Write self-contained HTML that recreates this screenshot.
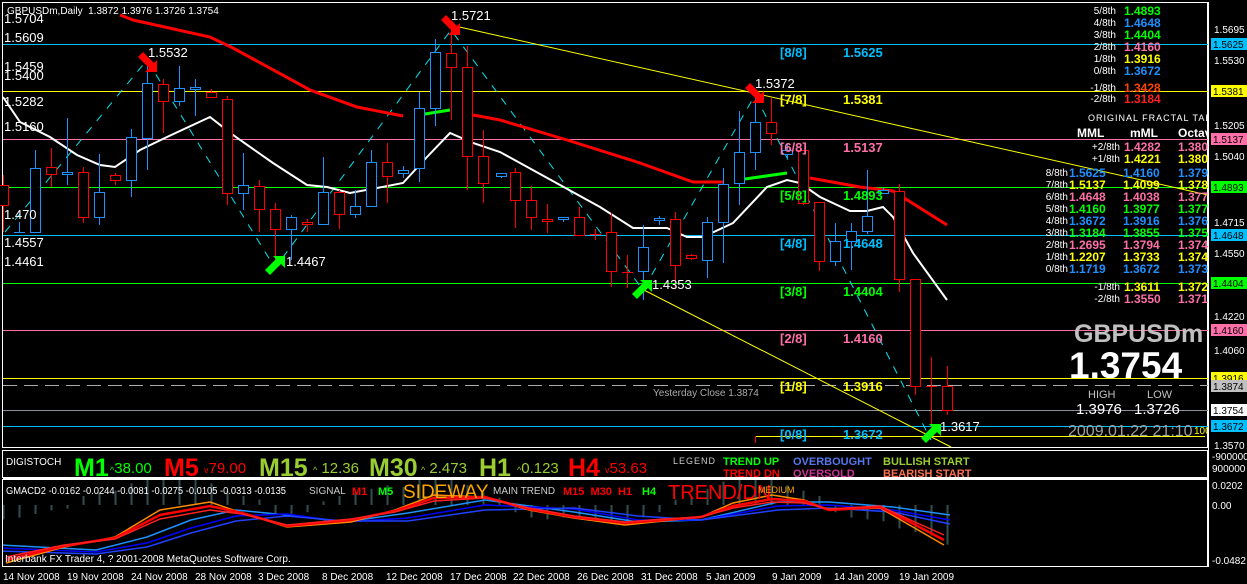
<!DOCTYPE html>
<html><head><meta charset="utf-8"><style>
html,body{margin:0;padding:0;background:#000;}
svg{display:block;}
text{font-family:"Liberation Sans",sans-serif;}
.n{font-family:"Liberation Sans Narrow","Liberation Sans",sans-serif;}
</style></head><body>
<svg width="1247" height="584" viewBox="0 0 1247 584" xmlns="http://www.w3.org/2000/svg">
<rect width="1247" height="584" fill="#000"/>
<g fill="none" stroke="#fff" stroke-width="1">
<rect x="2.5" y="2.5" width="1205" height="445"/>
<rect x="2.5" y="450.5" width="1205" height="27"/>
<rect x="2.5" y="479.5" width="1205" height="87"/>
</g>
<g stroke-width="1">
<line x1="3" x2="1208" y1="44.5" y2="44.5" stroke="#00bfff"/>
<line x1="3" x2="1208" y1="91.5" y2="91.5" stroke="#ffff00"/>
<line x1="3" x2="1208" y1="139.5" y2="139.5" stroke="#ff6fa8"/>
<line x1="3" x2="1208" y1="187.5" y2="187.5" stroke="#00ff00"/>
<line x1="3" x2="1208" y1="235.5" y2="235.5" stroke="#00bfff"/>
<line x1="3" x2="1208" y1="283.5" y2="283.5" stroke="#00ff00"/>
<line x1="3" x2="1208" y1="330.5" y2="330.5" stroke="#ff6fa8"/>
<line x1="3" x2="1208" y1="378.5" y2="378.5" stroke="#ffff00"/>
<line x1="3" x2="1208" y1="385.5" y2="385.5" stroke="#aaa" stroke-dasharray="14,7"/>
<line x1="3" x2="1208" y1="410.5" y2="410.5" stroke="#8a8f98"/>
<line x1="3" x2="1208" y1="426.5" y2="426.5" stroke="#00bfff"/>
<line x1="755" x2="1205" y1="436.5" y2="436.5" stroke="#ffff00"/>
<line x1="755.5" x2="755.5" y1="436" y2="443" stroke="#f00"/>
</g>
<line x1="455" y1="26" x2="1208" y2="195" stroke="#ffff00" stroke-width="1"/>
<line x1="640" y1="288" x2="951" y2="447" stroke="#ffff00" stroke-width="1"/>
<polyline points="5,232 147,60 275,268 451,30 643,290 755,95 931,440" fill="none" stroke="#00e5ee" stroke-width="1" stroke-dasharray="8,8"/>
<polyline fill="none" stroke="#f00" stroke-width="3" points="120,15 133,20 210,37 233,48 310,90 357,107 403,116"/>
<polyline fill="none" stroke="#0f0" stroke-width="3" points="425,114 450,110"/>
<polyline fill="none" stroke="#f00" stroke-width="3" points="473,115 500,120 567,140 640,163 693,182 723,182"/>
<polyline fill="none" stroke="#0f0" stroke-width="3" points="745,179 787,173"/>
<polyline fill="none" stroke="#f00" stroke-width="3" points="810,178 860,187 893,191 947,225"/>
<polyline fill="none" stroke="#fff" stroke-width="2" points="3,97 20,122 50,137 77,155 100,165 115,167 140,150 167,137 210,117 233,135 273,163 307,185 327,187 350,193 377,188 403,183 427,157 450,133 473,143 500,152 600,207 633,228 667,228 687,237 703,237 733,223 767,187 787,180 800,183 820,197 850,211 867,211 883,207 893,217 913,253 947,300"/>
<g stroke="#f00" stroke-width="1" fill="#000">
<line x1="3.5" x2="3.5" y1="175" y2="232"/><rect x="-1.5" y="185.5" width="10" height="20"/>
<line x1="51.5" x2="51.5" y1="148" y2="187"/><rect x="46.5" y="167.5" width="10" height="7"/>
<line x1="83.5" x2="83.5" y1="167" y2="223"/><rect x="78.5" y="172.5" width="10" height="45"/>
<line x1="115.5" x2="115.5" y1="173" y2="185"/><rect x="110.5" y="175.5" width="10" height="5"/>
<line x1="163.5" x2="163.5" y1="79" y2="133"/><rect x="158.5" y="84.5" width="10" height="17"/>
<line x1="211.5" x2="211.5" y1="89" y2="97"/><rect x="206.5" y="92.5" width="10" height="5"/>
<line x1="227.5" x2="227.5" y1="96" y2="205"/><rect x="222.5" y="99.5" width="10" height="94"/>
<line x1="259.5" x2="259.5" y1="180" y2="232"/><rect x="254.5" y="186.5" width="10" height="23"/>
<line x1="275.5" x2="275.5" y1="203" y2="268"/><rect x="270.5" y="209.5" width="10" height="20"/>
<line x1="307.5" x2="307.5" y1="219" y2="232"/><rect x="302.5" y="222.5" width="10" height="2"/>
<line x1="339.5" x2="339.5" y1="190" y2="229"/><rect x="334.5" y="192.5" width="10" height="22"/>
<line x1="387.5" x2="387.5" y1="143" y2="203"/><rect x="382.5" y="162.5" width="10" height="14"/>
<line x1="451.5" x2="451.5" y1="30" y2="120"/><rect x="446.5" y="53.5" width="10" height="14"/>
<line x1="467.5" x2="467.5" y1="46" y2="190"/><rect x="462.5" y="67.5" width="10" height="89"/>
<line x1="483.5" x2="483.5" y1="130" y2="203"/><rect x="478.5" y="156.5" width="10" height="27"/>
<line x1="515.5" x2="515.5" y1="168" y2="228"/><rect x="510.5" y="172.5" width="10" height="28"/>
<line x1="531.5" x2="531.5" y1="186" y2="230"/><rect x="526.5" y="200.5" width="10" height="17"/>
<line x1="547.5" x2="547.5" y1="204" y2="233"/><rect x="542.5" y="219.5" width="10" height="2"/>
<line x1="579.5" x2="579.5" y1="207" y2="235"/><rect x="574.5" y="217.5" width="10" height="18"/>
<line x1="595.5" x2="595.5" y1="229" y2="240"/><line x1="590" x2="601" y1="234.5" y2="234.5"/>
<line x1="611.5" x2="611.5" y1="213" y2="287"/><rect x="606.5" y="232.5" width="10" height="39"/>
<line x1="627.5" x2="627.5" y1="255" y2="288"/><line x1="622" x2="633" y1="272.5" y2="272.5"/>
<line x1="675.5" x2="675.5" y1="212" y2="289"/><rect x="670.5" y="219.5" width="10" height="46"/>
<line x1="691.5" x2="691.5" y1="254" y2="260"/><rect x="686.5" y="255.5" width="10" height="3"/>
<line x1="771.5" x2="771.5" y1="98" y2="145"/><rect x="766.5" y="122.5" width="10" height="11"/>
<line x1="803.5" x2="803.5" y1="150" y2="205"/><rect x="798.5" y="150.5" width="10" height="53"/>
<line x1="819.5" x2="819.5" y1="202" y2="271"/><rect x="814.5" y="202.5" width="10" height="59"/>
<line x1="899.5" x2="899.5" y1="184" y2="292"/><rect x="894.5" y="191.5" width="10" height="88"/>
<line x1="915.5" x2="915.5" y1="279" y2="395"/><rect x="910.5" y="279.5" width="10" height="107"/>
<line x1="931.5" x2="931.5" y1="357" y2="437"/><line x1="926" x2="937" y1="386.5" y2="386.5"/>
<line x1="947.5" x2="947.5" y1="366" y2="415"/><rect x="942.5" y="386.5" width="10" height="24"/>
</g>
<g stroke="#1e90ff" stroke-width="1" fill="#000">
<line x1="19.5" x2="19.5" y1="222" y2="232"/><line x1="14" x2="25" y1="232.5" y2="232.5"/>
<line x1="35.5" x2="35.5" y1="150" y2="232"/><rect x="30.5" y="168.5" width="10" height="64"/>
<line x1="67.5" x2="67.5" y1="118" y2="185"/><rect x="62.5" y="172.5" width="10" height="2"/>
<line x1="99.5" x2="99.5" y1="154" y2="225"/><rect x="94.5" y="192.5" width="10" height="25"/>
<line x1="131.5" x2="131.5" y1="129" y2="197"/><rect x="126.5" y="137.5" width="10" height="43"/>
<line x1="147.5" x2="147.5" y1="60" y2="170"/><rect x="142.5" y="83.5" width="10" height="55"/>
<line x1="179.5" x2="179.5" y1="66" y2="106"/><rect x="174.5" y="88.5" width="10" height="13"/>
<line x1="195.5" x2="195.5" y1="79" y2="116"/><rect x="190.5" y="87.5" width="10" height="2"/>
<line x1="243.5" x2="243.5" y1="153" y2="210"/><rect x="238.5" y="185.5" width="10" height="8"/>
<line x1="291.5" x2="291.5" y1="215" y2="260"/><rect x="286.5" y="217.5" width="10" height="12"/>
<line x1="323.5" x2="323.5" y1="157" y2="225"/><rect x="318.5" y="192.5" width="10" height="32"/>
<line x1="355.5" x2="355.5" y1="190" y2="218"/><rect x="350.5" y="206.5" width="10" height="8"/>
<line x1="371.5" x2="371.5" y1="150" y2="206"/><rect x="366.5" y="162.5" width="10" height="44"/>
<line x1="403.5" x2="403.5" y1="166" y2="178"/><rect x="398.5" y="170.5" width="10" height="3"/>
<line x1="419.5" x2="419.5" y1="92" y2="182"/><rect x="414.5" y="108.5" width="10" height="60"/>
<line x1="435.5" x2="435.5" y1="39" y2="126"/><rect x="430.5" y="52.5" width="10" height="56"/>
<line x1="501.5" x2="501.5" y1="173" y2="178"/><rect x="496.5" y="173.5" width="10" height="3"/>
<line x1="563.5" x2="563.5" y1="217" y2="222"/><rect x="558.5" y="217.5" width="10" height="2"/>
<line x1="643.5" x2="643.5" y1="225" y2="300"/><rect x="638.5" y="247.5" width="10" height="24"/>
<line x1="659.5" x2="659.5" y1="216" y2="225"/><rect x="654.5" y="218.5" width="10" height="2"/>
<line x1="707.5" x2="707.5" y1="217" y2="278"/><rect x="702.5" y="222.5" width="10" height="38"/>
<line x1="723.5" x2="723.5" y1="168" y2="263"/><rect x="718.5" y="184.5" width="10" height="38"/>
<line x1="739.5" x2="739.5" y1="111" y2="205"/><rect x="734.5" y="152.5" width="10" height="31"/>
<line x1="755.5" x2="755.5" y1="93" y2="170"/><rect x="750.5" y="122.5" width="10" height="30"/>
<line x1="787.5" x2="787.5" y1="143" y2="158"/><rect x="782.5" y="150.5" width="10" height="4"/>
<line x1="835.5" x2="835.5" y1="223" y2="266"/><rect x="830.5" y="241.5" width="10" height="20"/>
<line x1="851.5" x2="851.5" y1="223" y2="270"/><rect x="846.5" y="231.5" width="10" height="10"/>
<line x1="867.5" x2="867.5" y1="170" y2="234"/><rect x="862.5" y="216.5" width="10" height="15"/>
<line x1="883.5" x2="883.5" y1="188" y2="193"/><rect x="878.5" y="190.5" width="10" height="3"/>
</g>
<g fill="#f00">
<polygon points="157,72 145,72 149,68 138,57 143,52 154,63 157,60"/>
<polygon points="460,35 448,35 452,31 441,20 446,15 457,26 460,23"/>
<polygon points="764,103 752,103 756,99 745,88 750,83 761,94 764,91"/>
</g>
<g fill="#0f0">
<polygon points="285,256 285,268 281,264 270,275 265,270 276,259 273,256"/>
<polygon points="652,280 652,292 648,288 637,299 632,294 643,283 640,280"/>
<polygon points="941,424 941,436 937,432 926,443 921,438 932,427 929,424"/>
</g>
<g fill="#fff" font-size="13">
<text x="148" y="57">1.5532</text>
<text x="451" y="20">1.5721</text>
<text x="755" y="88">1.5372</text>
<text x="286" y="266">1.4467</text>
<text x="652" y="289">1.4353</text>
<text x="940" y="431">1.3617</text>
</g>
<g fill="#fff" font-size="13">
<text x="4" y="23">1.5704</text>
<text x="4" y="42">1.5609</text>
<text x="4" y="71">1.5459</text>
<text x="4" y="80">1.5400</text>
<text x="4" y="106">1.5282</text>
<text x="4" y="131">1.5160</text>
<text x="4" y="219">1.470</text>
<text x="4" y="247">1.4557</text>
<text x="4" y="266">1.4461</text>
</g>
<text x="7" y="14" fill="#fff" font-size="10">GBPUSDm,Daily&#160; 1.3872 1.3976 1.3726 1.3754</text>
<g font-size="13" font-weight="bold">
<text x="780" y="57" fill="#00bfff">[8/8]</text><text x="843" y="57" fill="#00bfff">1.5625</text>
<text x="780" y="104" fill="#ffff00">[7/8]</text><text x="843" y="104" fill="#ffff00">1.5381</text>
<text x="780" y="152" fill="#ff6fa8">[6/8]</text><text x="843" y="152" fill="#ff6fa8">1.5137</text>
<text x="780" y="200" fill="#00ff00">[5/8]</text><text x="843" y="200" fill="#00ff00">1.4893</text>
<text x="780" y="248" fill="#00bfff">[4/8]</text><text x="843" y="248" fill="#00bfff">1.4648</text>
<text x="780" y="296" fill="#00ff00">[3/8]</text><text x="843" y="296" fill="#00ff00">1.4404</text>
<text x="780" y="343" fill="#ff6fa8">[2/8]</text><text x="843" y="343" fill="#ff6fa8">1.4160</text>
<text x="780" y="391" fill="#ffff00">[1/8]</text><text x="843" y="391" fill="#ffff00">1.3916</text>
<text x="780" y="439" fill="#00bfff">[0/8]</text><text x="843" y="439" fill="#00bfff">1.3672</text>
</g>
<text x="653" y="396" fill="#aaa" font-size="10">Yesterday Close 1.3874</text>
<g font-size="10" fill="#fff" text-anchor="end">
<text x="1116" y="14">5/8th</text><text x="1116" y="26">4/8th</text><text x="1116" y="38">3/8th</text><text x="1116" y="50">2/8th</text><text x="1116" y="62">1/8th</text><text x="1116" y="74">0/8th</text><text x="1116" y="91">-1/8th</text><text x="1116" y="102">-2/8th</text>
</g>
<g font-size="12" font-weight="bold">
<text x="1124" y="15" fill="#00ff00">1.4893</text>
<text x="1124" y="27" fill="#1e90ff">1.4648</text>
<text x="1124" y="39" fill="#00ff00">1.4404</text>
<text x="1124" y="51" fill="#ff6fa8">1.4160</text>
<text x="1124" y="63" fill="#ffff00">1.3916</text>
<text x="1124" y="75" fill="#1e90ff">1.3672</text>
<text x="1124" y="92" fill="#ff4500">1.3428</text>
<text x="1124" y="103" fill="#ff2020">1.3184</text>
</g>
<text x="1088" y="121" fill="#fff" font-size="9" letter-spacing="1">ORIGINAL FRACTAL TABLE</text>
<g fill="#fff" font-size="12" font-weight="bold">
<text x="1077" y="137">MML</text><text x="1130" y="137">mML</text><text x="1178" y="137">Octav</text>
</g>
<svg x="1030" y="138" width="178" height="170" overflow="hidden">
<g font-size="10" fill="#fff" text-anchor="end" transform="translate(-1030,-138)">
<text x="1120" y="150">+2/8th</text><text x="1120" y="162">+1/8th</text>
<text x="1068" y="176">8/8th</text><text x="1068" y="188">7/8th</text><text x="1068" y="200">6/8th</text><text x="1068" y="212">5/8th</text><text x="1068" y="224">4/8th</text><text x="1068" y="236">3/8th</text><text x="1068" y="248">2/8th</text><text x="1068" y="260">1/8th</text><text x="1068" y="272">0/8th</text>
<text x="1120" y="290">-1/8th</text><text x="1120" y="302">-2/8th</text>
</g>
<g font-size="12" font-weight="bold" transform="translate(-1030,-138)">
<text x="1124" y="151" fill="#ff6fa8">1.4282</text><text x="1178" y="151" fill="#ff6fa8">1.380</text>
<text x="1124" y="163" fill="#ffff00">1.4221</text><text x="1178" y="163" fill="#ffff00">1.380</text>
<text x="1069" y="177" fill="#1e90ff">1.5625</text><text x="1123" y="177" fill="#1e90ff">1.4160</text><text x="1178" y="177" fill="#1e90ff">1.379</text>
<text x="1069" y="189" fill="#ffff00">1.5137</text><text x="1123" y="189" fill="#ffff00">1.4099</text><text x="1178" y="189" fill="#ffff00">1.378</text>
<text x="1069" y="201" fill="#ff6fa8">1.4648</text><text x="1123" y="201" fill="#ff6fa8">1.4038</text><text x="1178" y="201" fill="#ff6fa8">1.377</text>
<text x="1069" y="213" fill="#00ff00">1.4160</text><text x="1123" y="213" fill="#00ff00">1.3977</text><text x="1178" y="213" fill="#00ff00">1.377</text>
<text x="1069" y="225" fill="#1e90ff">1.3672</text><text x="1123" y="225" fill="#1e90ff">1.3916</text><text x="1178" y="225" fill="#1e90ff">1.376</text>
<text x="1069" y="237" fill="#00ff00">1.3184</text><text x="1123" y="237" fill="#00ff00">1.3855</text><text x="1178" y="237" fill="#00ff00">1.375</text>
<text x="1069" y="249" fill="#ff6fa8">1.2695</text><text x="1123" y="249" fill="#ff6fa8">1.3794</text><text x="1178" y="249" fill="#ff6fa8">1.374</text>
<text x="1069" y="261" fill="#ffff00">1.2207</text><text x="1123" y="261" fill="#ffff00">1.3733</text><text x="1178" y="261" fill="#ffff00">1.374</text>
<text x="1069" y="273" fill="#1e90ff">1.1719</text><text x="1123" y="273" fill="#1e90ff">1.3672</text><text x="1178" y="273" fill="#1e90ff">1.373</text>
<text x="1124" y="291" fill="#ffff00">1.3611</text><text x="1178" y="291" fill="#ffff00">1.372</text>
<text x="1124" y="303" fill="#ff6fa8">1.3550</text><text x="1178" y="303" fill="#ff6fa8">1.371</text>
</g>
</svg>
<text x="1074" y="342" fill="#c0c0c0" font-size="25" font-weight="bold">GBPUSDm</text>
<text x="1069" y="378" fill="#fff" font-size="37" font-weight="bold">1.3754</text>
<text x="1088" y="398" fill="#c0c0c0" font-size="11">HIGH</text><text x="1147" y="398" fill="#c0c0c0" font-size="11">LOW</text>
<text x="1076" y="414" fill="#fff" font-size="15">1.3976</text><text x="1134" y="414" fill="#fff" font-size="15">1.3726</text>
<text x="1068" y="436" fill="#a0a0a0" font-size="16">2009.01.22 21:10</text>
<text x="1194" y="434" fill="#ffff00" font-size="10">100.0</text>
<rect x="1209" y="0" width="38" height="584" fill="#000"/>
<line x1="1208.5" x2="1208.5" y1="2" y2="567" stroke="#fff"/>
<g font-size="10" fill="#fff">
<text x="1214" y="33">1.5695</text><text x="1214" y="64">1.5530</text><text x="1214" y="129">1.5205</text><text x="1214" y="160">1.5040</text><text x="1214" y="226">1.4715</text><text x="1214" y="257">1.4550</text><text x="1214" y="320">1.4220</text><text x="1214" y="354">1.4060</text><text x="1214" y="449">1.3570</text>
<text x="1212" y="460">-900000</text><text x="1212" y="472">900000</text>
<text x="1212" y="489">0.0202</text><text x="1212" y="509">0.00</text><text x="1212" y="564">-0.0482</text>
</g>
<g font-size="10">
<rect x="1211" y="38" width="36" height="12" fill="#00bfff"/><text x="1213" y="48" fill="#000">1.5625</text>
<rect x="1211" y="85" width="36" height="12" fill="#ffff00"/><text x="1213" y="95" fill="#000">1.5381</text>
<rect x="1211" y="133" width="36" height="12" fill="#ff6fa8"/><text x="1213" y="143" fill="#000">1.5137</text>
<rect x="1211" y="181" width="36" height="12" fill="#00ff00"/><text x="1213" y="191" fill="#000">1.4893</text>
<rect x="1211" y="229" width="36" height="12" fill="#00bfff"/><text x="1213" y="239" fill="#000">1.4648</text>
<rect x="1211" y="277" width="36" height="12" fill="#00ff00"/><text x="1213" y="287" fill="#000">1.4404</text>
<rect x="1211" y="324" width="36" height="12" fill="#ff6fa8"/><text x="1213" y="334" fill="#000">1.4160</text>
<rect x="1211" y="372" width="36" height="12" fill="#ffff00"/><text x="1213" y="382" fill="#000">1.3916</text>
<rect x="1211" y="380" width="36" height="12" fill="#c0c0c0"/><text x="1213" y="390" fill="#000">1.3874</text>
<rect x="1211" y="404" width="36" height="12" fill="#fff"/><text x="1213" y="414" fill="#000">1.3754</text>
<rect x="1211" y="420" width="36" height="12" fill="#00bfff"/><text x="1213" y="430" fill="#000">1.3672</text>
</g>
<text x="6" y="465" fill="#fff" font-size="10">DIGISTOCH</text>
<g class="n" font-weight="bold" font-size="25">
<text class="n" x="74" y="476" fill="#00ff00">M1</text>
<text class="n" x="164" y="476" fill="#ff0000">M5</text>
<text class="n" x="259" y="476" fill="#9acd32">M15</text>
<text class="n" x="369" y="476" fill="#9acd32">M30</text>
<text class="n" x="479" y="476" fill="#9acd32">H1</text>
<text class="n" x="568" y="476" fill="#ff0000">H4</text>
</g>
<g font-size="15">
<text x="110" y="473" fill="#00ff00"><tspan font-size="9">^</tspan>38.00</text>
<text x="204" y="473" fill="#ff0000"><tspan font-size="9">v</tspan>79.00</text>
<text x="313" y="473" fill="#9acd32"><tspan font-size="9">^</tspan> 12.36</text>
<text x="421" y="473" fill="#9acd32"><tspan font-size="9">^</tspan> 2.473</text>
<text x="517" y="473" fill="#9acd32"><tspan font-size="9">^</tspan>0.123</text>
<text x="605" y="473" fill="#ff0000"><tspan font-size="9">v</tspan>53.63</text>
</g>
<text x="673" y="464" fill="#ccc" font-size="9" letter-spacing="1">LEGEND</text>
<g font-size="11" font-weight="bold">
<text x="723" y="465" fill="#00ff00">TREND UP</text>
<text x="723" y="477" fill="#ff0000">TREND DN</text>
<text x="793" y="465" fill="#5577ee">OVERBOUGHT</text>
<text x="793" y="477" fill="#cc3399">OVERSOLD</text>
<text x="883" y="465" fill="#9acd32">BULLISH START</text>
<text x="883" y="477" fill="#ff7050">BEARISH START</text>
</g>
<line x1="3" x2="1208" y1="478.5" y2="478.5" stroke="#fff"/>
<svg x="3" y="480" width="1205" height="86" overflow="hidden">
<g transform="translate(-3,-480)">
<g stroke="#2f4f4f" stroke-width="2" transform="translate(0,505) scale(1,1.8) translate(0,-505)">
<line x1="3.5" x2="3.5" y1="505" y2="513"/><line x1="19.5" x2="19.5" y1="505" y2="512"/><line x1="35.5" x2="35.5" y1="505" y2="510"/><line x1="51.5" x2="51.5" y1="505" y2="508"/><line x1="67.5" x2="67.5" y1="505" y2="507"/>
<line x1="83.5" x2="83.5" y1="500" y2="505"/><line x1="99.5" x2="99.5" y1="498" y2="505"/><line x1="115.5" x2="115.5" y1="497" y2="505"/><line x1="131.5" x2="131.5" y1="493" y2="505"/><line x1="147.5" x2="147.5" y1="491" y2="505"/><line x1="163.5" x2="163.5" y1="490" y2="505"/><line x1="179.5" x2="179.5" y1="491" y2="505"/><line x1="195.5" x2="195.5" y1="491" y2="505"/><line x1="211.5" x2="211.5" y1="493" y2="505"/>
<line x1="227.5" x2="227.5" y1="497" y2="505"/><line x1="243.5" x2="243.5" y1="500" y2="505"/><line x1="259.5" x2="259.5" y1="502" y2="505"/><line x1="275.5" x2="275.5" y1="505" y2="510"/><line x1="291.5" x2="291.5" y1="505" y2="511"/>
<line x1="307.5" x2="307.5" y1="505" y2="509"/><line x1="323.5" x2="323.5" y1="503" y2="505"/><line x1="339.5" x2="339.5" y1="500" y2="505"/><line x1="355.5" x2="355.5" y1="498" y2="505"/><line x1="371.5" x2="371.5" y1="496" y2="505"/><line x1="387.5" x2="387.5" y1="494" y2="505"/><line x1="403.5" x2="403.5" y1="495" y2="505"/><line x1="419.5" x2="419.5" y1="491" y2="505"/><line x1="435.5" x2="435.5" y1="489" y2="505"/><line x1="451.5" x2="451.5" y1="490" y2="505"/><line x1="467.5" x2="467.5" y1="494" y2="505"/><line x1="483.5" x2="483.5" y1="498" y2="505"/>
<line x1="499.5" x2="499.5" y1="501" y2="505"/><line x1="515.5" x2="515.5" y1="505" y2="509"/><line x1="531.5" x2="531.5" y1="505" y2="512"/><line x1="547.5" x2="547.5" y1="505" y2="513"/><line x1="563.5" x2="563.5" y1="505" y2="512"/><line x1="579.5" x2="579.5" y1="505" y2="513"/><line x1="595.5" x2="595.5" y1="505" y2="514"/><line x1="611.5" x2="611.5" y1="505" y2="515"/><line x1="627.5" x2="627.5" y1="505" y2="514"/><line x1="643.5" x2="643.5" y1="505" y2="512"/><line x1="659.5" x2="659.5" y1="505" y2="509"/>
<line x1="675.5" x2="675.5" y1="502" y2="505"/><line x1="691.5" x2="691.5" y1="500" y2="505"/><line x1="707.5" x2="707.5" y1="496" y2="505"/><line x1="723.5" x2="723.5" y1="492" y2="505"/><line x1="739.5" x2="739.5" y1="490" y2="505"/><line x1="755.5" x2="755.5" y1="489" y2="505"/><line x1="771.5" x2="771.5" y1="491" y2="505"/><line x1="787.5" x2="787.5" y1="494" y2="505"/><line x1="803.5" x2="803.5" y1="497" y2="505"/><line x1="819.5" x2="819.5" y1="500" y2="505"/>
<line x1="835.5" x2="835.5" y1="505" y2="509"/><line x1="851.5" x2="851.5" y1="505" y2="512"/><line x1="867.5" x2="867.5" y1="505" y2="513"/><line x1="883.5" x2="883.5" y1="505" y2="514"/><line x1="899.5" x2="899.5" y1="505" y2="518"/><line x1="915.5" x2="915.5" y1="505" y2="520"/><line x1="931.5" x2="931.5" y1="505" y2="522"/><line x1="947.5" x2="947.5" y1="505" y2="527"/>
</g>
<g fill="none" stroke-width="1.5">
<polyline stroke="#1e90ff" points="0,545 96,550 147,537 191,520 236,510 287,515 344,522 408,513 485,500 574,512 638,522 701,520 778,502 829,502 893,507 950,515"/>
<polyline stroke="#0000ff" points="0,548 96,552 147,543 191,528 236,516 287,514 344,522 408,518 485,505 574,509 638,520 701,520 778,506 829,505 893,510 950,520"/>
<polyline stroke="#2040ff" points="0,551 96,554 147,547 191,533 236,521 287,516 344,521 408,521 485,510 574,508 638,516 701,520 778,510 829,508 893,512 950,524"/>
<polyline stroke="#ff8c00" points="6,563 64,547 115,537 160,510 210,502 242,513 287,527 351,522 395,510 434,495 485,497 529,510 574,518 625,525 663,521 701,517 733,503 772,495 804,500 829,510 880,508 906,523 944,545"/>
<polyline stroke="#ff0000" stroke-width="2.5" points="6,560 64,546 115,538 160,515 210,506 242,513 287,526 351,520 395,511 434,498 485,497 529,509 574,517 625,523 663,520 701,517 733,506 772,499 804,501 829,510 880,507 906,520 944,540"/>
<polyline stroke="#ff2020" points="6,557 64,545 115,539 160,519 210,510 242,514 287,525 351,519 395,512 434,501 485,498 529,508 574,516 625,522 663,519 701,517 733,508 772,502 804,503 829,509 880,506 906,518 944,535"/>
</g>
</g>
</svg>
<text x="6" y="494" fill="#fff" font-size="10" textLength="280" lengthAdjust="spacingAndGlyphs">GMACD2 -0.0162 -0.0244 -0.0081 -0.0275 -0.0105 -0.0313 -0.0135</text>
<text x="309" y="494" fill="#ccc" font-size="10">SIGNAL</text>
<text x="352" y="495" fill="#ff0000" font-size="11" font-weight="bold">M1</text>
<text x="378" y="495" fill="#00ff00" font-size="11" font-weight="bold">M5</text>
<text class="n" x="403" y="498" fill="#ffa500" font-size="19">SIDEWAY</text>
<text x="493" y="494" fill="#ccc" font-size="10">MAIN TREND</text>
<text x="563" y="495" fill="#ff0000" font-size="11" font-weight="bold">M15&#160; M30&#160; H1</text>
<text x="642" y="495" fill="#00ff00" font-size="11" font-weight="bold">H4</text>
<text class="n" x="668" y="499" fill="#ff0000" font-size="20">TREND/DN</text>
<text x="758" y="493" fill="#ffa500" font-size="9">MEDIUM</text>
<text x="5" y="562" fill="#fff" font-size="10">Interbank FX Trader 4, ? 2001-2008 MetaQuotes Software Corp.</text>
<g font-size="10" fill="#fff">
<text x="3" y="580">14 Nov 2008</text><text x="67" y="580">19 Nov 2008</text><text x="131" y="580">24 Nov 2008</text><text x="195" y="580">28 Nov 2008</text><text x="258" y="580">3 Dec 2008</text><text x="322" y="580">8 Dec 2008</text><text x="386" y="580">12 Dec 2008</text><text x="450" y="580">17 Dec 2008</text><text x="513" y="580">22 Dec 2008</text><text x="577" y="580">26 Dec 2008</text><text x="641" y="580">31 Dec 2008</text><text x="706" y="580">5 Jan 2009</text><text x="772" y="580">9 Jan 2009</text><text x="834" y="580">14 Jan 2009</text><text x="899" y="580">19 Jan 2009</text>
</g>
</svg>
</body></html>
